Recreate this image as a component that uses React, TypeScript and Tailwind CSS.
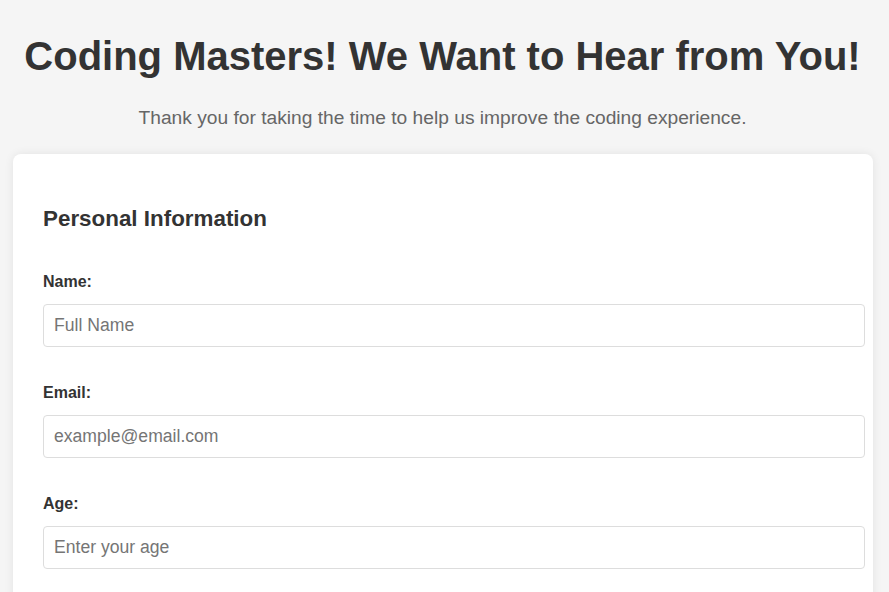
export default function App() {
  const fields = [
    { label: "Name:", placeholder: "Full Name", type: "text" },
    { label: "Email:", placeholder: "example@email.com", type: "email" },
    { label: "Age:", placeholder: "Enter your age", type: "number" },
  ];
  return (
    <div className="min-h-[592px] bg-[#f5f5f5] font-['Liberation_Sans',Arial,sans-serif] text-[#333] pt-[33px] pb-10">
      <h1 className="pr-[4px] text-center text-[40px] leading-[46px] font-bold text-[#333]">
        Coding Masters! We Want to Hear from You!
      </h1>
      <p className="pr-[4px] mt-[28px] text-center text-[19.2px] leading-[22px] text-[#666]">
        Thank you for taking the time to help us improve the coding experience.
      </p>
      <div className="mt-[25px] ml-[13px] w-[860px] rounded-lg bg-white shadow-[0_0_10px_rgba(0,0,0,0.08)] pl-[30px] pt-[52px] pb-10">
        <h2 className="text-[22.4px] leading-[26px] font-bold text-[#333]">Personal Information</h2>
        <div className="mt-[41px] flex flex-col gap-[37px]">
          {fields.map((f) => (
            <div key={f.label} className="flex flex-col">
              <label className="text-[16px] leading-[18px] font-bold text-[#333]">{f.label}</label>
              <input
                type={f.type === "number" ? "text" : f.type}
                placeholder={f.placeholder}
                className="mt-[13px] w-[822px] h-[43px] rounded-[4px] border border-[#dddddd] bg-white px-[10px] text-[17.6px] text-[#333] placeholder:text-[#757575] outline-none font-['Liberation_Sans',Arial,sans-serif]"
              />
            </div>
          ))}
        </div>
      </div>
    </div>
  );
}
